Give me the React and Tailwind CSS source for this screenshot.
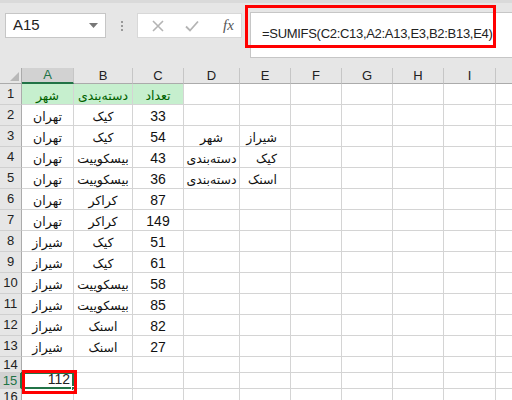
import React from "react"

const cols = [
  { l: "A", w: "w-[52px]" },
  { l: "B", w: "w-[59px]" },
  { l: "C", w: "w-[51px]" },
  { l: "D", w: "w-[56px]" },
  { l: "E", w: "w-[51px]" },
  { l: "F", w: "w-[51px]" },
  { l: "G", w: "w-[51px]" },
  { l: "H", w: "w-[51px]" },
  { l: "I", w: "w-[52px]" },
]

const data = [
  ["تهران", "کیک", "33"],
  ["تهران", "کیک", "54"],
  ["تهران", "بیسکوییت", "43"],
  ["تهران", "بیسکوییت", "36"],
  ["تهران", "کراکر", "87"],
  ["تهران", "کراکر", "149"],
  ["شیراز", "کیک", "51"],
  ["شیراز", "کیک", "61"],
  ["شیراز", "بیسکوییت", "58"],
  ["شیراز", "بیسکوییت", "85"],
  ["شیراز", "اسنک", "82"],
  ["شیراز", "اسنک", "27"],
]

const side = {
  3: ["شهر", "شیراز"],
  4: ["دسته‌بندی", "کیک"],
  5: ["دسته‌بندی", "اسنک"],
}

const fa = { fontFamily: '"DejaVu Sans", sans-serif' }
const lat = { fontFamily: '"Liberation Sans", Arial, sans-serif' }

function RowHead({ n, h, selected }) {
  return (
    <div
      style={lat}
      className={`w-[22px] shrink-0 ${h} flex items-center justify-center text-[13px] border-b border-[#d0d0d0] ${
        selected
          ? "bg-[#d2d2d2] text-[#217346] border-r-2 border-r-[#217346]"
          : "bg-[#e6e6e6] text-[#222] border-r border-r-[#ababab]"
      }`}
    >
      {n}
    </div>
  )
}

function Cell({ w, h, children, className = "", style }) {
  return (
    <div
      style={style}
      className={`${w} ${h} shrink-0 border-r border-b border-[#d4d4d4] flex items-end pb-[2px] text-[12.5px] leading-none whitespace-nowrap ${className}`}
    >
      {children}
    </div>
  )
}

export default function App() {
  const rows = []
  for (let r = 1; r <= 16; r++) rows.push(r)

  return (
    <div className="w-[512px] h-[400px] overflow-hidden bg-white relative select-none">
      {/* formula bar area */}
      <div className="h-[68px] bg-[#e6e6e6] flex items-start pl-[5px] pt-[13px] border-t-[3px] border-[#dadada]">
        <div className="w-[101px] h-[25px] shrink-0 -mt-[3px] bg-white border border-[#c6c6c6] flex items-center justify-between px-[7px]">
          <span style={lat} className="text-[15px] text-[#222]">A15</span>
          <svg width="9" height="5" viewBox="0 0 9 5"><path d="M0 0h9L4.5 5z" fill="#777" /></svg>
        </div>
        <div className="w-[31px] h-[25px] shrink-0 -mt-[3px] flex flex-col items-center justify-center gap-[2px]">
          <span className="w-[2px] h-[2px] bg-[#999]" />
          <span className="w-[2px] h-[2px] bg-[#999]" />
          <span className="w-[2px] h-[2px] bg-[#999]" />
        </div>
        <div className="w-[105px] h-[25px] shrink-0 -mt-[3px] bg-white border border-[#d8d8d8] flex items-center pl-[14px]">
          <svg width="12" height="12" viewBox="0 0 12 12"><path d="M1 1l10 10M11 1L1 11" stroke="#b4b4b4" strokeWidth="1.6" /></svg>
          <svg className="ml-[21px]" width="14" height="12" viewBox="0 0 14 12"><path d="M1 6.5l4 4L13 1.5" stroke="#b4b4b4" strokeWidth="1.8" fill="none" /></svg>
          <span className="ml-[24px] text-[15px] italic text-[#555]" style={{ fontFamily: '"Liberation Serif", serif' }}>
            fx
          </span>
        </div>
        <div className="flex-1 min-w-0 overflow-hidden h-[46px] -mt-[4px] ml-[8px] bg-white border border-r-0 border-[#c6c6c6] pl-[11px] pt-[7px]">
          <span style={lat} className="text-[13px] tracking-[-0.3px] text-[#222] whitespace-nowrap">
            =SUMIFS(C2:C13,A2:A13,E3,B2:B13,E4)
          </span>
        </div>
      </div>
      <div className="absolute left-[245px] top-[5px] w-[251px] h-[43px] border-[3px] border-[#ff0000]" />

      {/* column headers */}
      <div className="flex h-[16px]">
        <div className="w-[22px] h-[16px] shrink-0 bg-[#e6e6e6] border-r border-b border-[#ababab] flex items-end justify-end p-[2px]">
          <svg width="9" height="9" viewBox="0 0 9 9"><path d="M9 0v9H0z" fill="#b8b8b8" /></svg>
        </div>
        {cols.map((c) => (
          <div
            key={c.l}
            style={lat}
            className={`${c.w} h-[16px] shrink-0 flex items-center justify-center text-[13px] border-r border-[#c6c6c6] ${
              c.l === "A"
                ? "bg-[#d2d2d2] text-[#217346] border-b-2 border-b-[#217346]"
                : "bg-[#e6e6e6] text-[#222] border-b border-b-[#ababab]"
            }`}
          >
            {c.l}
          </div>
        ))}
        <div className="flex-1 h-[16px] bg-[#e6e6e6] border-b border-[#ababab]" />
      </div>

      {/* rows */}
      {rows.map((r) => {
        const h = r <= 13 ? "h-[21px]" : "h-[16px]"
        const d = r >= 2 && r <= 13 ? data[r - 2] : null
        const s = side[r]
        return (
          <div key={r} className="flex">
            <RowHead n={r} h={h} selected={r === 15} />
            <Cell w="w-[52px]" h={h} style={r === 15 ? lat : fa} className={`relative ${r === 1 ? "bg-[#c6efce] text-[#006100] justify-center" : r === 15 ? "justify-end pr-[3px] text-[14px] text-[#222]" : "justify-center text-[#111]"}`}>
              {r === 1 ? "شهر" : d ? d[0] : r === 15 ? "112" : ""}
              {r === 15 && (
                <>
                  <div className="absolute -left-px -top-px -right-px -bottom-px border-2 border-[#217346]" />
                  <div className="absolute -right-[3px] -bottom-[3px] w-[5px] h-[5px] bg-[#217346] border border-white" />
                </>
              )}
            </Cell>
            <Cell w="w-[59px]" h={h} style={fa} className={`justify-center ${r === 1 ? "bg-[#c6efce] text-[#006100]" : "text-[#111]"}`}>
              {r === 1 ? "دسته‌بندی" : d ? d[1] : ""}
            </Cell>
            <Cell w="w-[51px]" h={h} style={r === 1 ? fa : lat} className={`justify-center ${r === 1 ? "bg-[#c6efce] text-[#006100]" : "text-[14px] text-[#111]"}`}>
              {r === 1 ? "تعداد" : d ? d[2] : ""}
            </Cell>
            <Cell w="w-[56px]" h={h} style={fa} className="justify-center text-[#111]">
              {s ? s[0] : ""}
            </Cell>
            <Cell w="w-[51px]" h={h} style={fa} className="justify-end pr-[13px] text-[#111]">
              {s ? s[1] : ""}
            </Cell>
            <Cell w="w-[51px]" h={h} />
            <Cell w="w-[51px]" h={h} />
            <Cell w="w-[51px]" h={h} />
            <Cell w="w-[52px]" h={h} />
            <div className={`flex-1 ${h} border-b border-[#d4d4d4]`} />
          </div>
        )
      })}

      <div className="absolute left-[22px] top-[370px] w-[55px] h-[24px] border-[3px] border-[#ff0000]" />
    </div>
  )
}
